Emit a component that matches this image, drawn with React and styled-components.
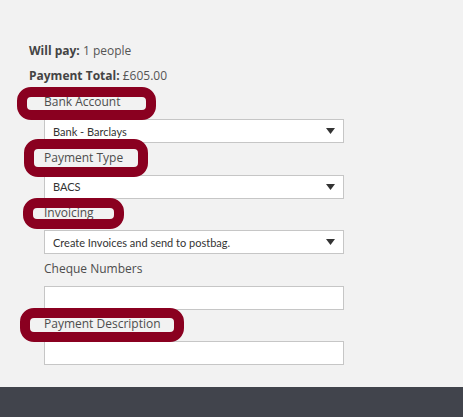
import React from "react";
import styled, { createGlobalStyle } from "styled-components";

const Global = createGlobalStyle`
  html, body { margin: 0; padding: 0; background: #f2f2f2; }
  body { font-family: "Open Sans", "Noto Sans", sans-serif; color: #4a4a4a; }
`;

const Page = styled.div`
  display: flex;
  flex-direction: column;
  min-height: 417px;
`;

const Content = styled.div`
  padding: 42px 0 17px 29px;
  width: 315px;
`;

const SummaryLine = styled.div`
  font-size: 12px;
  line-height: 18px;
  margin-bottom: 7px;
  color: #555;
  b { color: #444; font-weight: 700; }
`;

const Fields = styled.div`
  margin-top: 0.5px;
  padding-left: 15px;
`;

const Field = styled.div`
  position: relative;
  margin-bottom: 4.5px;
`;

const Label = styled.div`
  font-size: 12px;
  line-height: 20px;
  margin-bottom: 7px;
  color: #4d4d4d;
`;

const Control = styled.div`
  box-sizing: border-box;
  height: 24px;
  width: 300px;
  background: #fff;
  border: 1px solid #c6c6c6;
  display: flex;
  align-items: center;
  justify-content: space-between;
  padding: 0 8px 0 8px;
  font-family: Lato, "Open Sans", sans-serif;
  font-size: 11px;
  color: #333;
`;

const Arrow = styled.svg`
  width: 9px;
  height: 6px;
  flex: none;
`;

const Ring = styled.div`
  position: absolute;
  box-sizing: border-box;
  left: ${(p) => p.$x}px;
  top: ${(p) => p.$y}px;
  width: ${(p) => p.$w}px;
  height: ${(p) => p.$h}px;
  border: 10px solid #8a0020;
  border-radius: 14px;
  z-index: 2;
  pointer-events: none;
`;

const Footer = styled.div`
  flex: 1;
  min-height: 30px;
  background: #41444c;
`;

const SelectBox = ({ value }) => (
  <Control>
    <span>{value}</span>
    <Arrow viewBox="0 0 9 6">
      <path d="M0 0H9L4.5 6Z" fill="#333" />
    </Arrow>
  </Control>
);

const fields = [
  { label: "Bank Account", value: "Bank - Barclays", select: true, ring: { x: -27, y: -5.5, w: 139, h: 33 } },
  { label: "Payment Type", value: "BACS", select: true, ring: { x: -20, y: -9, w: 124, h: 38 } },
  { label: "Invoicing", value: "Create Invoices and send to postbag.", select: true, ring: { x: -21, y: -5.5, w: 101, h: 31 } },
  { label: "Cheque Numbers", value: "", select: false },
  { label: "Payment Description", value: "", select: false, ring: { x: -24, y: -6.5, w: 164, h: 34 } },
];

export default function App() {
  return (
    <Page>
      <Global />
      <Content>
        <SummaryLine><b>Will pay:</b> 1 people</SummaryLine>
        <SummaryLine><b>Payment Total:</b> £605.00</SummaryLine>
        <Fields>
          {fields.map((f) => (
            <Field key={f.label}>
              {f.ring && <Ring $x={f.ring.x} $y={f.ring.y} $w={f.ring.w} $h={f.ring.h} />}
              <Label>{f.label}</Label>
              {f.select ? <SelectBox value={f.value} /> : <Control />}
            </Field>
          ))}
        </Fields>
      </Content>
      <Footer />
    </Page>
  );
}
